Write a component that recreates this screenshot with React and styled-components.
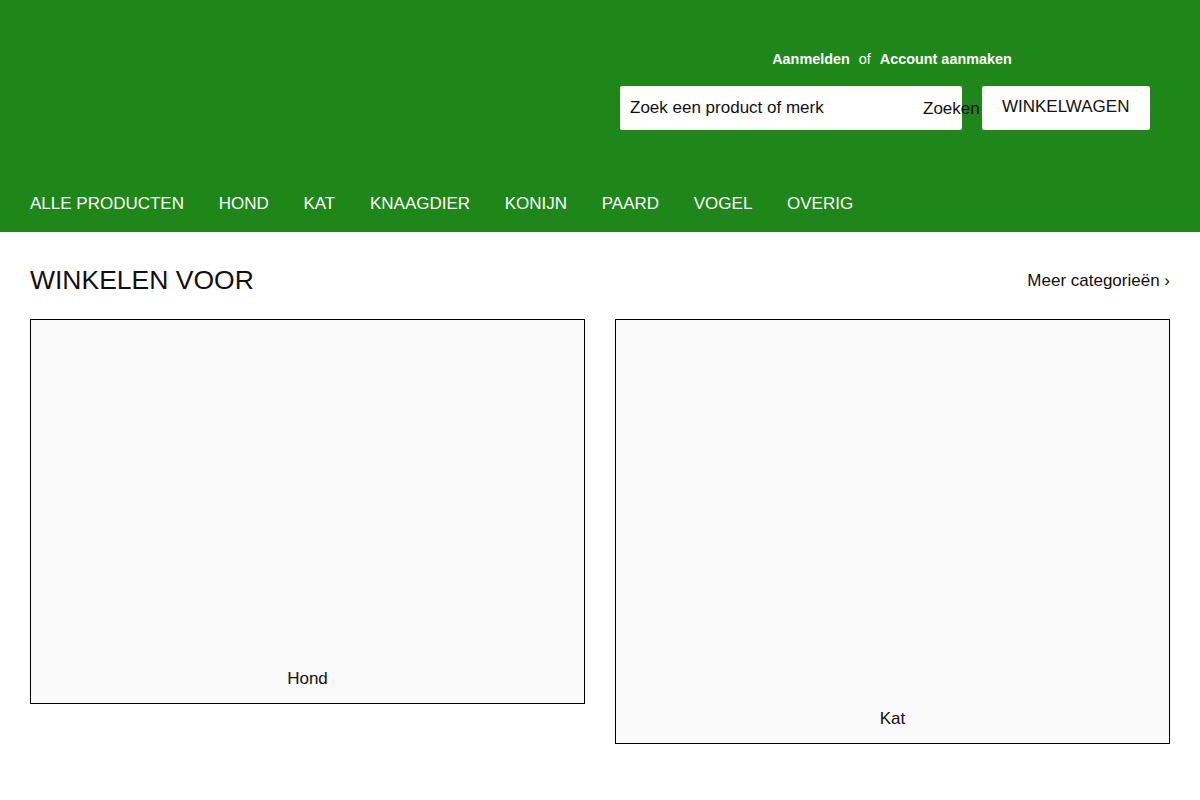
import React from "react";
import styled, { createGlobalStyle } from "styled-components";

const Global = createGlobalStyle`
  html, body { margin: 0; padding: 0; background: #fff; }
  body { font-family: "Liberation Sans", Arial, sans-serif; color: #111; }
  * { box-sizing: border-box; }
`;

const Header = styled.header`
  background: #1f8619;
  padding: 50px 30px 0;
`;

const TopArea = styled.div`
  display: flex;
  justify-content: flex-end;
`;

const RightColumn = styled.div`
  display: flex;
  flex-direction: column;
  width: 530px;
  margin-right: 20px;
`;

const AccountLinks = styled.div`
  display: flex;
  justify-content: center;
  align-items: center;
  padding-left: 14px;
  font-size: 14.4px;
  line-height: 18px;
  color: #fff;
`;

const AccountLink = styled.a`
  color: #fff;
  font-weight: bold;
  text-decoration: none;
`;

const Or = styled.span`
  margin: 0 9px;
`;

const SearchRow = styled.div`
  display: flex;
  align-items: center;
  margin-top: 18px;
  height: 44px;
`;

const SearchInput = styled.input`
  width: 342px;
  height: 44px;
  border: none;
  border-radius: 2px;
  padding: 0 10px;
  font-family: "Liberation Sans", Arial, sans-serif;
  font-size: 17px;
  color: #111;
  background: #fff;
  outline: none;
  &::placeholder { color: #111; opacity: 1; }
`;

const SearchButton = styled.button`
  position: relative;
  margin-left: -39px;
  padding: 2px 0 0;
  border: none;
  background: transparent;
  font-family: "Liberation Sans", Arial, sans-serif;
  font-size: 17px;
  color: #111;
  cursor: pointer;
`;

const CartButton = styled.button`
  margin-left: 2px;
  width: 168px;
  height: 44px;
  border: none;
  border-radius: 2px;
  background: #fff;
  padding: 0 20px 2px;
  font-family: "Liberation Sans", Arial, sans-serif;
  font-size: 17px;
  color: #111;
  cursor: pointer;
`;

const Nav = styled.nav`
  display: flex;
  align-items: center;
  gap: 34.7px;
  height: 56px;
  margin-top: 46px;
`;

const NavLink = styled.a`
  color: #fff;
  font-size: 17px;
  text-decoration: none;
`;

const Main = styled.main`
  padding: 33px 30px 40px;
`;

const SectionHead = styled.div`
  display: flex;
  justify-content: space-between;
  align-items: center;
  margin-bottom: 24px;
`;

const Title = styled.h2`
  margin: 0;
  font-size: 26.5px;
  font-weight: normal;
  line-height: 30px;
  color: #111;
`;

const MoreLink = styled.a`
  padding-top: 2px;
  font-size: 17px;
  color: #111;
  text-decoration: none;
`;

const Grid = styled.div`
  display: grid;
  grid-template-columns: 1fr 1fr;
  gap: 30px;
  align-items: start;
`;

const Card = styled.a`
  display: flex;
  flex-direction: column;
  border: 1px solid #000;
  background: #f9f9f9;
  text-decoration: none;
  color: #111;
`;

const CardImage = styled.div`
  height: ${(p) => p.$h}px;
`;

const CardLabel = styled.span`
  text-align: center;
  font-size: 17px;
  line-height: 20px;
  padding: 1px 0 14px;
`;

const navItems = ["ALLE PRODUCTEN", "HOND", "KAT", "KNAAGDIER", "KONIJN", "PAARD", "VOGEL", "OVERIG"];

const categories = [
  { name: "Hond", h: 348 },
  { name: "Kat", h: 388 },
];

export default function App() {
  return (
    <>
      <Global />
      <Header>
        <TopArea>
          <RightColumn>
            <AccountLinks>
              <AccountLink href="#">Aanmelden</AccountLink>
              <Or>of</Or>
              <AccountLink href="#">Account aanmaken</AccountLink>
            </AccountLinks>
            <SearchRow>
              <SearchInput placeholder="Zoek een product of merk" />
              <SearchButton>Zoeken</SearchButton>
              <CartButton>WINKELWAGEN</CartButton>
            </SearchRow>
          </RightColumn>
        </TopArea>
        <Nav>
          {navItems.map((n) => (
            <NavLink key={n} href="#">{n}</NavLink>
          ))}
        </Nav>
      </Header>
      <Main>
        <SectionHead>
          <Title>WINKELEN VOOR</Title>
          <MoreLink href="#">Meer categorieën ›</MoreLink>
        </SectionHead>
        <Grid>
          {categories.map((c) => (
            <Card key={c.name} href="#">
              <CardImage $h={c.h} />
              <CardLabel>{c.name}</CardLabel>
            </Card>
          ))}
        </Grid>
      </Main>
    </>
  );
}
